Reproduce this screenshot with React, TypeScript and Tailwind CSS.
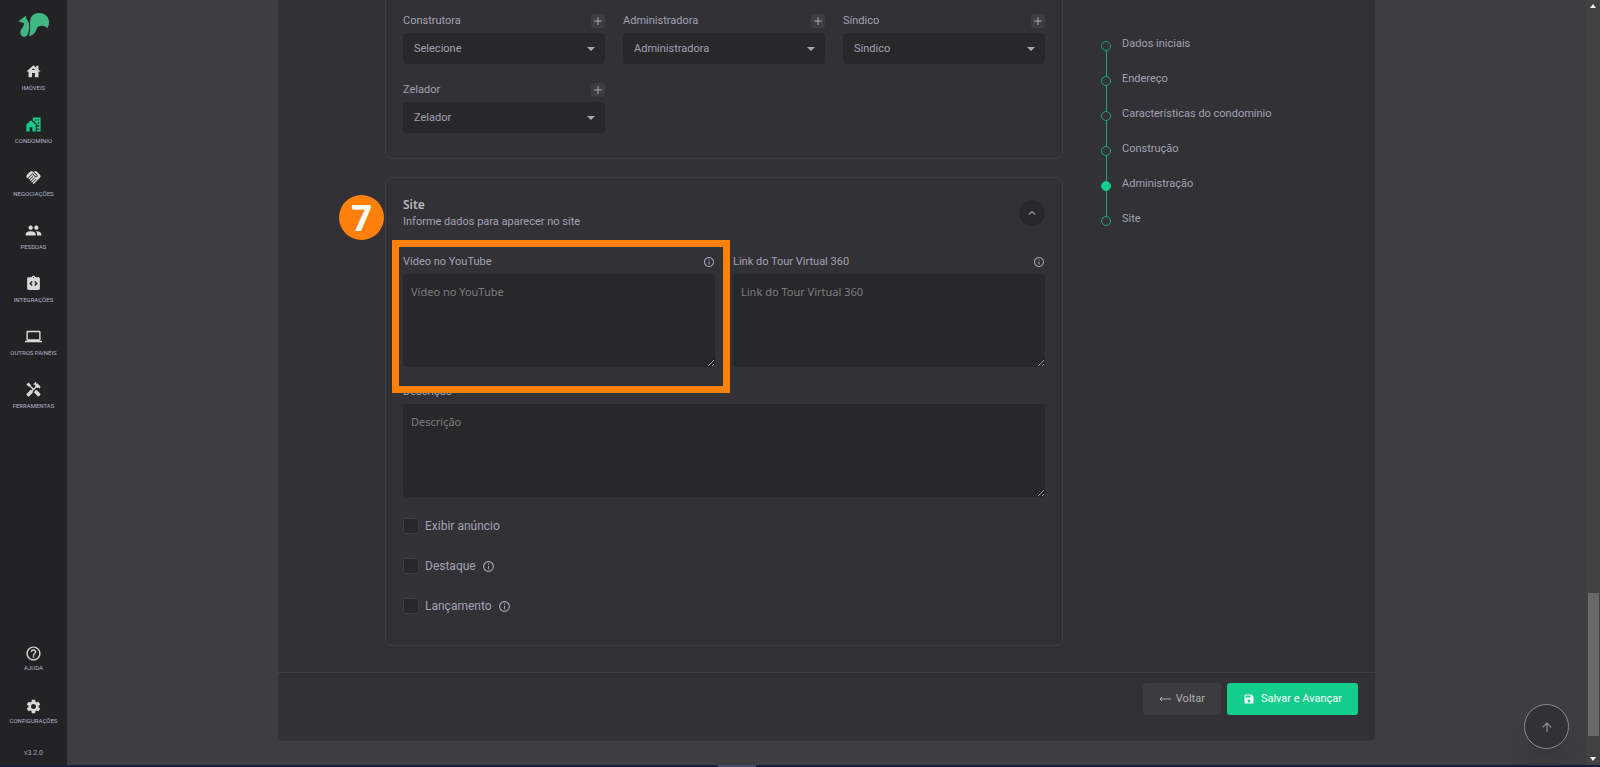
import React, { useState } from "react";

import {
  MdArrowUpward,
  MdGroup,
  MdHandshake,
  MdHandyman,
  MdHelpOutline,
  MdHouse,
  MdIntegrationInstructions,
  MdKeyboardArrowUp,
  MdLaptop,
  MdOutlineInfo,
  MdSave,
  MdSettings,
} from "react-icons/md";

const CondoIcon = ({ className }: { className?: string }) => (
  <svg viewBox="0 0 24 24" className={className} fill="currentColor">
    <path d="M2 22v-10l6.5-6 6.5 6v10h-4.5v-6h-4v6z" />
    <path
      fillRule="evenodd"
      d="M11 2h11v20h-5.500v-2.500h1.500v-2h-1.500v-2.500h1.500v-2h-1.500v-2l-2.500-2.300v-1.700h-2l-1-1zM14 4.500v2h2v-2zM18 4.500v2h2v-2zM18 8.800v2h2v-2zM18 13v2h2v-2zM18 17.500v2h2v-2z"
    />
  </svg>
);

const navItems = [
  { item: "IMÓVEIS", icon: MdHouse },
  { item: "CONDOMÍNIO", icon: CondoIcon, active: true },
  { item: "NEGOCIAÇÕES", icon: MdHandshake },
  { item: "PESSOAS", icon: MdGroup },
  { item: "INTEGRAÇÕES", icon: MdIntegrationInstructions },
  { item: "OUTROS PAINÉIS", icon: MdLaptop },
  { item: "FERRAMENTAS", icon: MdHandyman },
];

const footerItems = [
  { item: "AJUDA", icon: MdHelpOutline },
  { item: "CONFIGURAÇÕES", icon: MdSettings },
];

const steps = [
  "Dados iniciais",
  "Endereço",
  "Características do condomínio",
  "Construção",
  "Administração",
  "Site",
];

const selects = [
  { label: "Construtora", value: "Selecione" },
  { label: "Administradora", value: "Administradora" },
  { label: "Síndico", value: "Síndico" },
  { label: "Zelador", value: "Zelador" },
];

const Logo = () => (
  <svg viewBox="0 0 30 24" className="w-[30px] h-6 shrink-0" fill="#41b883">
    <path d="M6.400 2.800 C5.800 4 4.600 4.700 3.200 5.400 C1.600 6.300 .2 7.600 0 8.600 C.6 9.600 2.400 9.600 4.200 9.800 C5.200 10.200 5.200 11.200 4.600 12.400 C3.400 14.600 1.400 17 1.300 19.600 C1.200 22.200 3 23.800 5.200 23.800 C7 23.800 8 22.800 8.800 21 C10 18.600 10.400 15.800 10.200 12.600 C10 9.400 8.800 7.200 7.400 6 C7.300 4.800 7.200 3.600 6.400 2.800 Z" />
    <path d="M10 22.900 C10.600 20 11.300 17.400 11.200 13.600 C11.100 10.600 10.600 7.400 12 4.600 C13.600 1.400 16.800 0 20.400 0 C26 0 30 4 30 9 C30 11.800 29.400 14 28.200 15.200 C27 13.800 25.400 12.800 23 12.800 C20.200 12.800 18.400 13.800 17.600 16 C16.600 18.800 14.800 22.600 10 22.900 Z" />
  </svg>
);

type NavLinkProps = {
  item: string;
  icon: React.ElementType;
  active?: boolean;
};

const NavLink = ({ item, icon: Icon, active }: NavLinkProps) => (
  <>
    <Icon
      className={
        active ? "size-[17px] text-[#12cd8b]" : "size-[17px] text-[#d9d9d9]"
      }
    />
    <span className="text-[6px] leading-[10px] text-[#b4b4cb] whitespace-nowrap">
      {item}
    </span>
  </>
);

const SelectField = ({ label, value }: { label: string; value: string }) => (
  <div>
    <div className="flex items-center justify-between h-4 mb-1">
      <label htmlFor={label} className="text-[11px] leading-4">
        {label}
      </label>
      <button
        aria-label={"Adicionar " + label}
        className="flex items-center justify-center size-[14px] rounded-sm bg-[#3e3d42]"
      >
        <svg viewBox="0 0 8 8" className="size-2" stroke="#a8a8ae" fill="none">
          <path d="M4 0v8M0 4h8" />
        </svg>
      </button>
    </div>
    <div className="relative">
      <select
        id={label}
        className="appearance-none w-full h-[31px] rounded-sm bg-[#28282a] px-[11px] text-[11px] leading-4"
      >
        <option>{value}</option>
      </select>
      <svg
        viewBox="0 0 8 4"
        className="absolute right-[10px] top-[14px] w-2 h-1 pointer-events-none"
        fill="#a8a8ae"
      >
        <path d="M0 0h8L4 4z" />
      </svg>
    </div>
  </div>
);

const TextField = ({ label, info }: { label: string; info?: boolean }) => (
  <div>
    <div className="flex items-center justify-between h-4 mb-1">
      <label htmlFor={label} className="text-[11px] leading-4">
        {label}
      </label>
      {info && <MdOutlineInfo className="size-3" />}
    </div>
    <textarea
      id={label}
      placeholder={label}
      className="block w-full h-[93px] rounded-sm bg-[#28282a] px-2 py-[9px] text-[11px] leading-[18px] font-['Noto_Sans',sans-serif] placeholder:text-[#7c7c80]"
    />
  </div>
);

const CheckField = ({ label, info }: { label: string; info?: boolean }) => (
  <div className="flex items-center h-4">
    <input
      id={label}
      type="checkbox"
      className="appearance-none size-4 rounded-xs border border-[#3f3e43] bg-[#28282a]"
    />
    <label htmlFor={label} className="ml-[6px] text-xs leading-4">
      {label}
    </label>
    {info && <MdOutlineInfo className="ml-[6px] size-[13px]" />}
  </div>
);

const App = () => {
  const [isOpen, setIsOpen] = useState(true);

  return (
    <div className="flex flex-col h-screen overflow-hidden bg-[#3e3d42] font-[Roboto,sans-serif] text-[#a2a2b5]">
      <div className="flex flex-1 min-h-0">
        <aside className="flex flex-col items-center shrink-0 w-[67px] bg-[#232325] pt-[13px]">
          <Logo />
          <nav className="flex flex-col gap-[23px] mt-[26px]">
            {navItems.map((nav) => (
              <a
                key={nav.item}
                href="#"
                className="flex flex-col items-center gap-[3px]"
              >
                <NavLink {...nav} />
              </a>
            ))}
          </nav>
          <nav className="flex flex-col gap-[25px] mt-auto">
            {footerItems.map((nav) => (
              <a
                key={nav.item}
                href="#"
                className="flex flex-col items-center gap-px"
              >
                <NavLink {...nav} />
              </a>
            ))}
          </nav>
          <span className="mt-[22px] mb-[7px] text-[7px] leading-[10px]">
            v3.2.0
          </span>
        </aside>

        <main className="flex-1 px-[211px]">
          <div className="rounded-b-md bg-[#323136] pb-[26px]">
            <div className="flex">
              <div className="flex-1 ml-[107px]">
                <section className="grid grid-cols-3 gap-[18px] rounded-b-md border border-t-0 border-[#3f3e43] px-[17px] pt-[13px] pb-[25px]">
                  {selects.map((field) => (
                    <SelectField key={field.label} {...field} />
                  ))}
                </section>

                <section className="relative mt-[18px] rounded-md border border-[#3f3e43] px-[17px] pt-[18px] pb-[31px]">
                  <div className="flex items-center justify-between">
                    <div>
                      <h2 className="text-xs leading-[18px] font-semibold font-['Noto_Sans',sans-serif] text-[#b9b9bb]">
                        Site
                      </h2>
                      <p className="text-[11px] leading-4">
                        Informe dados para aparecer no site
                      </p>
                    </div>
                    <button
                      aria-label="Recolher"
                      onClick={() => setIsOpen(!isOpen)}
                      className="flex items-center justify-center size-[26px] rounded-full bg-[#28282a]"
                    >
                      <MdKeyboardArrowUp className="size-[14px]" />
                    </button>
                  </div>

                  {isOpen && (
                    <>
                      <div className="grid grid-cols-2 gap-[18px] mt-6">
                        <TextField label="Vídeo no YouTube" info />
                        <TextField label="Link do Tour Virtual 360" info />
                      </div>
                      <div className="mt-[17px]">
                        <TextField label="Descrição" />
                      </div>
                      <div className="flex flex-col gap-6 mt-[21px]">
                        <CheckField label="Exibir anúncio" />
                        <CheckField label="Destaque" info />
                        <CheckField label="Lançamento" info />
                      </div>
                    </>
                  )}

                  {/* Marcador del paso del tutorial */}
                  <div className="absolute left-[6px] top-[62px] w-[338px] h-[153px] border-[7px] border-[#ff800b] pointer-events-none" />
                  <div className="absolute -left-[47px] top-[17px] flex items-center justify-center size-[45px] rounded-full bg-[#ff800b] font-['Noto_Sans',sans-serif] text-4xl font-bold text-white">
                    7
                  </div>
                </section>
              </div>

              <ol className="w-[312px] pl-[38px] pt-[37px]">
                {steps.map((step, index) => (
                  <li key={step} className="flex h-[35px]">
                    <div className="flex flex-col items-center pt-1">
                      <span
                        className={
                          step === "Administração"
                            ? "size-[10px] shrink-0 rounded-full border border-[#12cd8b] bg-[#12cd8b]"
                            : "size-[10px] shrink-0 rounded-full border border-[#1aa878]"
                        }
                      />
                      {index < steps.length - 1 && (
                        <span className="w-px h-[25px] shrink-0 bg-[#1aa878]" />
                      )}
                    </div>
                    <a href="#" className="ml-[11px] text-[11px] leading-[14px]">
                      {step}
                    </a>
                  </li>
                ))}
              </ol>
            </div>

            <div className="flex justify-end gap-[6px] mt-[26px] border-t border-[#3f3e43] pt-[10px] pr-[17px]">
              <button className="flex items-center gap-[5px] h-8 rounded-[3px] bg-[#3c3b40] px-4 text-[11px] text-[#b0b0b4]">
                <svg
                  viewBox="0 0 12 6"
                  className="w-3 h-[6px]"
                  stroke="currentColor"
                  fill="none"
                >
                  <path d="M12 3H1M3 1L1 3l2 2" />
                </svg>
                Voltar
              </button>
              <button className="flex items-center gap-[6px] h-8 rounded-[3px] bg-[#12cd8b] px-4 text-[11px] text-white">
                <MdSave className="size-3" />
                Salvar e Avançar
              </button>
            </div>
          </div>
        </main>

        <div className="flex flex-col items-center shrink-0 w-[14px] bg-[#424242] py-1">
          <svg viewBox="0 0 6 4" className="w-[6px] h-1" fill="#fff">
            <path d="M0 4h6L3 0z" />
          </svg>
          <div className="w-[11px] h-[143px] mt-auto mb-[21px] bg-[#686868]" />
          <svg viewBox="0 0 6 4" className="w-[6px] h-1" fill="#fff">
            <path d="M0 0h6L3 4z" />
          </svg>
        </div>
      </div>

      <div className="flex justify-center shrink-0 h-[2px] bg-[#1a1b40] pr-[126px]">
        <div className="w-[38px] bg-[#46486a]" />
      </div>

      <button
        aria-label="Voltar ao topo"
        className="fixed right-[31px] bottom-[18px] flex items-center justify-center size-[45px] rounded-full border border-[#8b8b8e] bg-[#323136] text-[#96969a] shadow-xl"
      >
        <MdArrowUpward className="size-[14px]" />
      </button>
    </div>
  );
};

export default App;
